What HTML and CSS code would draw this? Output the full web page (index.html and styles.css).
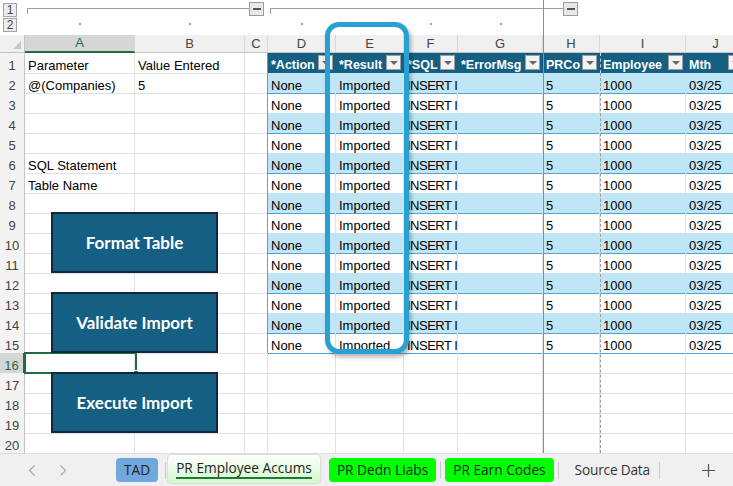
FILE: index.html
```html
<!DOCTYPE html>
<html lang="en">
<head>
  <meta charset="UTF-8">
  <title>PR Employee Accums</title>
  <link rel="stylesheet" href="styles.css">
</head>
<body>
  <div class="app">
    <div class="outline">
      <div class="levels"><span class="lvl">1</span><span class="lvl">2</span></div>
      <div class="grp g-ab"><i class="bar"></i><span class="tog"></span></div>
      <div class="grp g-dh"><i class="bar"></i><span class="tog"></span></div>
      <span class="dotcell"><i></i></span>
      <span class="dotcell"><i></i></span>
      <span class="dotcell"></span>
      <span class="dotcell"><i></i></span>
      <span class="dotcell"><i></i></span>
      <span class="dotcell"><i></i></span>
      <span class="dotcell"><i></i></span>
    </div>

    <div class="row hdr">
      <div class="ch corner"><svg width="8" height="8" viewBox="0 0 8 8"><path d="M8 0V8H0Z" fill="#c9c9c9"/></svg></div>
      <div class="ch on">A</div><div class="ch">B</div><div class="ch">C</div><div class="ch">D</div><div class="ch">E</div>
      <div class="ch">F</div><div class="ch">G</div><div class="ch">H</div><div class="ch">I</div><div class="ch">J</div>
    </div>

    <div class="row">
      <div class="c rh">1</div><div class="c">Parameter</div><div class="c">Value Entered</div><div class="c edge"></div>
      <div class="c th"><span>*Action</span><b class="flt"></b></div>
      <div class="c th"><span>*Result</span><b class="flt"></b></div>
      <div class="c th"><span>*SQL</span><b class="flt"></b></div>
      <div class="c th"><span>*ErrorMsg</span><b class="flt"></b></div>
      <div class="c th"><span>PRCo</span><b class="flt"></b></div>
      <div class="c th"><span>Employee</span><b class="flt"></b></div>
      <div class="c th"><span>Mth</span><b class="flt"></b></div>
    </div>

    <div class="row band">
      <div class="c rh">2</div><div class="c">@(Companies)</div><div class="c">5</div><div class="c edge"></div>
      <div class="c t">None</div><div class="c t">Imported</div><div class="c t clip">INSERT I</div><div class="c t"></div><div class="c t">5</div><div class="c t">1000</div><div class="c t">03/25</div>
    </div>
    <div class="row">
      <div class="c rh">3</div><div class="c"></div><div class="c"></div><div class="c edge"></div>
      <div class="c t">None</div><div class="c t">Imported</div><div class="c t clip">INSERT I</div><div class="c t"></div><div class="c t">5</div><div class="c t">1000</div><div class="c t">03/25</div>
    </div>
    <div class="row band">
      <div class="c rh">4</div><div class="c"></div><div class="c"></div><div class="c edge"></div>
      <div class="c t">None</div><div class="c t">Imported</div><div class="c t clip">INSERT I</div><div class="c t"></div><div class="c t">5</div><div class="c t">1000</div><div class="c t">03/25</div>
    </div>
    <div class="row">
      <div class="c rh">5</div><div class="c"></div><div class="c"></div><div class="c edge"></div>
      <div class="c t">None</div><div class="c t">Imported</div><div class="c t clip">INSERT I</div><div class="c t"></div><div class="c t">5</div><div class="c t">1000</div><div class="c t">03/25</div>
    </div>
    <div class="row band">
      <div class="c rh">6</div><div class="c">SQL Statement</div><div class="c"></div><div class="c edge"></div>
      <div class="c t">None</div><div class="c t">Imported</div><div class="c t clip">INSERT I</div><div class="c t"></div><div class="c t">5</div><div class="c t">1000</div><div class="c t">03/25</div>
    </div>
    <div class="row">
      <div class="c rh">7</div><div class="c">Table Name</div><div class="c"></div><div class="c edge"></div>
      <div class="c t">None</div><div class="c t">Imported</div><div class="c t clip">INSERT I</div><div class="c t"></div><div class="c t">5</div><div class="c t">1000</div><div class="c t">03/25</div>
    </div>
    <div class="row band">
      <div class="c rh">8</div><div class="c"></div><div class="c"></div><div class="c edge"></div>
      <div class="c t">None</div><div class="c t">Imported</div><div class="c t clip">INSERT I</div><div class="c t"></div><div class="c t">5</div><div class="c t">1000</div><div class="c t">03/25</div>
    </div>
    <div class="row">
      <div class="c rh">9</div><div class="c"></div><div class="c"></div><div class="c edge"></div>
      <div class="c t">None</div><div class="c t">Imported</div><div class="c t clip">INSERT I</div><div class="c t"></div><div class="c t">5</div><div class="c t">1000</div><div class="c t">03/25</div>
    </div>
    <div class="row band">
      <div class="c rh">10</div><div class="c"></div><div class="c"></div><div class="c edge"></div>
      <div class="c t">None</div><div class="c t">Imported</div><div class="c t clip">INSERT I</div><div class="c t"></div><div class="c t">5</div><div class="c t">1000</div><div class="c t">03/25</div>
    </div>
    <div class="row">
      <div class="c rh">11</div><div class="c"></div><div class="c"></div><div class="c edge"></div>
      <div class="c t">None</div><div class="c t">Imported</div><div class="c t clip">INSERT I</div><div class="c t"></div><div class="c t">5</div><div class="c t">1000</div><div class="c t">03/25</div>
    </div>
    <div class="row band">
      <div class="c rh">12</div><div class="c"></div><div class="c"></div><div class="c edge"></div>
      <div class="c t">None</div><div class="c t">Imported</div><div class="c t clip">INSERT I</div><div class="c t"></div><div class="c t">5</div><div class="c t">1000</div><div class="c t">03/25</div>
    </div>
    <div class="row">
      <div class="c rh">13</div><div class="c"></div><div class="c"></div><div class="c edge"></div>
      <div class="c t">None</div><div class="c t">Imported</div><div class="c t clip">INSERT I</div><div class="c t"></div><div class="c t">5</div><div class="c t">1000</div><div class="c t">03/25</div>
    </div>
    <div class="row band">
      <div class="c rh">14</div><div class="c"></div><div class="c"></div><div class="c edge"></div>
      <div class="c t">None</div><div class="c t">Imported</div><div class="c t clip">INSERT I</div><div class="c t"></div><div class="c t">5</div><div class="c t">1000</div><div class="c t">03/25</div>
    </div>
    <div class="row">
      <div class="c rh">15</div><div class="c"></div><div class="c"></div><div class="c edge"></div>
      <div class="c t">None</div><div class="c t">Imported</div><div class="c t clip">INSERT I</div><div class="c t"></div><div class="c t">5</div><div class="c t">1000</div><div class="c t">03/25</div>
    </div>
    <div class="row">
      <div class="c rh on">16</div><div class="c"></div><div class="c"></div><div class="c"></div><div class="c"></div><div class="c"></div><div class="c"></div><div class="c"></div><div class="c"></div><div class="c"></div><div class="c"></div>
    </div>
    <div class="row">
      <div class="c rh">17</div><div class="c"></div><div class="c"></div><div class="c"></div><div class="c"></div><div class="c"></div><div class="c"></div><div class="c"></div><div class="c"></div><div class="c"></div><div class="c"></div>
    </div>
    <div class="row">
      <div class="c rh">18</div><div class="c"></div><div class="c"></div><div class="c"></div><div class="c"></div><div class="c"></div><div class="c"></div><div class="c"></div><div class="c"></div><div class="c"></div><div class="c"></div>
    </div>
    <div class="row">
      <div class="c rh">19</div><div class="c"></div><div class="c"></div><div class="c"></div><div class="c"></div><div class="c"></div><div class="c"></div><div class="c"></div><div class="c"></div><div class="c"></div><div class="c"></div>
    </div>
    <div class="row">
      <div class="c rh">20</div><div class="c"></div><div class="c"></div><div class="c"></div><div class="c"></div><div class="c"></div><div class="c"></div><div class="c"></div><div class="c"></div><div class="c"></div><div class="c"></div>
    </div>

    <div class="tabs">
      <span class="nav"><svg width="8" height="11" viewBox="0 0 8 11"><path d="M6.5 0.5L1.5 5.5L6.5 10.5" fill="none" stroke="#a9a9a9" stroke-width="1.2"/></svg></span>
      <span class="nav"><svg width="8" height="11" viewBox="0 0 8 11"><path d="M1.5 0.5L6.5 5.5L1.5 10.5" fill="none" stroke="#a9a9a9" stroke-width="1.2"/></svg></span>
      <span class="tab tad">TAD</span><i class="sep"></i>
      <span class="tab active"><span>PR Employee Accums</span></span>
      <span class="tab lime">PR Dedn Liabs</span><i class="sep"></i>
      <span class="tab lime">PR Earn Codes</span><i class="sep"></i>
      <span class="tab plain">Source Data</span><i class="sep"></i>
      <span class="add"><svg width="13" height="13" viewBox="0 0 13 13"><path d="M6.5 0V13M0 6.5H13" stroke="#555" stroke-width="1.2"/></svg></span>
    </div>

    <!-- overlays -->
    <div class="vline"></div>
    <div class="pbreak top"></div>
    <div class="pbreak"></div>
    <div class="sel"><i class="handle"></i></div>
    <div class="shape s1">Format Table</div>
    <div class="shape s2">Validate Import</div>
    <div class="shape s3">Execute Import</div>
    <div class="focus"></div>
  </div>
</body>
</html>
```

FILE: styles.css
```css
* { box-sizing: border-box; }
body {
  margin: 0;
  background: #fff;
  font-family: "Liberation Sans", Arial, sans-serif;
  color: #000;
}
.app {
  position: relative;
  width: 733px;
  height: 486px;
  overflow: hidden;
  background: #fff;
}

/* outline (grouping) area */
.outline {
  display: grid;
  grid-template-columns: 25px 110px 110px 23px 68px 68px 54px 85px 57px 86px 60px;
  grid-template-rows: 17px 18px;
  height: 35px;
}
.levels {
  grid-row: 1 / 3;
  grid-column: 1;
  display: flex;
  flex-direction: column;
  gap: 1px;
  padding: 3px 0 0 3px;
}
.lvl {
  width: 14px;
  height: 14px;
  border: 1px solid #a3a3a3;
  background: #ececec;
  color: #444;
  font-size: 12px;
  line-height: 12px;
  text-align: center;
}
.grp {
  grid-row: 1;
  display: flex;
  align-items: flex-start;
}
.g-ab { grid-column: 2 / 5; }
.g-dh { grid-column: 5 / 10; }
.bar {
  flex: 1;
  height: 6px;
  margin: 8px 0 0 2px;
  border-top: 1px solid #a0a0a0;
  border-left: 1px solid #a0a0a0;
}
.tog {
  width: 15px;
  height: 14px;
  margin-top: 2px;
  border: 1px solid #9b9b9b;
  background: #e8e8e8;
  display: flex;
  align-items: center;
  justify-content: center;
}
.tog::after {
  content: "";
  width: 8px;
  height: 2px;
  background: #555;
}
.g-ab .tog { margin-right: 4px; }
.g-dh .tog { margin-right: 22px; }
.dotcell {
  grid-row: 2;
  display: flex;
  justify-content: center;
  padding-top: 6px;
}
.dotcell i {
  width: 2px;
  height: 2px;
  background: #9a9a9a;
}

/* sheet grid */
.row {
  display: grid;
  grid-template-columns: 25px 110px 110px 23px 68px 68px 54px 85px 57px 86px 60px;
  height: 20px;
  font-size: 13px;
}
.row.hdr { height: 18px; }
.ch {
  background: #f0f0f0;
  color: #444;
  text-align: center;
  line-height: 17px;
  border-right: 1px solid #d8d8d8;
  border-bottom: 1px solid #c4c4c4;
}
.ch.corner {
  display: flex;
  justify-content: flex-end;
  align-items: flex-end;
  padding: 0 3px 3px 0;
  border-right-color: #c4c4c4;
}
.ch.on {
  background: #d6d6d6;
  color: #1e6e42;
  border-bottom: 2px solid #1e6e42;
  line-height: 16px;
}
.c {
  padding: 5px 0 0 3px;
  line-height: 15px;
  white-space: nowrap;
  border-right: 1px solid #e1e1e1;
  border-bottom: 1px solid #e1e1e1;
}
.c.rh {
  padding-left: 0;
  text-align: center;
  background: #f3f3f3;
  color: #444;
  border-right-color: #c4c4c4;
  border-bottom-color: #dcdcdc;
}
.c.rh.on {
  background: #d6d6d6;
  color: #1e6e42;
  border-right: 2px solid #1e6e42;
}
.c.edge { border-right-color: #4ea6d6; }
.c.clip {
  overflow: hidden;
  letter-spacing: -0.5px;
}
.c.t { border-bottom-color: #4ea6d6; }
.band .c.t {
  background: #c0e6f5;
  border-right-color: #c0e6f5;
}

/* table header row */
.c.th {
  display: flex;
  justify-content: space-between;
  padding-right: 2px;
  background: #156082;
  border-right-color: #156082;
  border-bottom-color: #4ea6d6;
  color: #fff;
  font-weight: bold;
  font-size: 12.5px;
}
.flt {
  flex: none;
  width: 15px;
  height: 15px;
  margin-top: -3px;
  border: 1px solid #9e9e9e;
  background: #f3f3f3;
  display: flex;
  align-items: center;
  justify-content: center;
}
.flt::after {
  content: "";
  border-left: 4px solid transparent;
  border-right: 4px solid transparent;
  border-top: 4px solid #666;
}

/* sheet tabs */
.tabs {
  display: flex;
  align-items: center;
  height: 32px;
  margin-top: 1px;
  padding-left: 16px;
  background: #f0f0f0;
  font-family: "Open Sans", "Liberation Sans", sans-serif;
  font-size: 13.7px;
  color: #222;
}
.nav {
  width: 31px;
  display: flex;
  justify-content: center;
}
.tab {
  height: 24px;
  padding: 0 8px;
  line-height: 24px;
  border-radius: 4px;
}
.tad {
  margin-left: 38px;
  background: #6fa8dc;
}
.lime { background: #00ff00; }
.active {
  align-self: flex-start;
  height: 28px;
  margin: 1px 9px 0 0;
  background: linear-gradient(#ffffff, #d2f8cc);
  box-shadow: 0 0 2px rgba(0, 0, 0, 0.3);
  border-radius: 4px 4px 3px 3px;
  line-height: 18px;
  padding-top: 3px;
}
.active span {
  display: inline-block;
  border-bottom: 2px solid #1f7a36;
  line-height: 19px;
}
.plain {
  padding: 0 9px 0 12px;
  color: #333;
  letter-spacing: -0.2px;
}
.sep {
  width: 1px;
  height: 17px;
  margin: 0 4px;
  background: #c9c9c9;
}
.tad + .sep { margin: 0 2px 0 7px; }
.plain + .sep { margin: 0; }
.add {
  margin-left: 42px;
  display: flex;
}

/* overlays on the grid */
.vline {
  position: absolute;
  left: 543px;
  top: 0;
  width: 1px;
  height: 453px;
  background: #8e8e8e;
}
.pbreak {
  position: absolute;
  left: 600px;
  top: 73px;
  height: 380px;
  border-left: 1px dashed #9a9a9a;
}
.pbreak.top {
  top: 53px;
  height: 20px;
  border-left-color: rgba(255, 255, 255, 0.75);
}
.sel {
  position: absolute;
  left: 24px;
  top: 352px;
  width: 113px;
  height: 22px;
  border: 2px solid #1e6e42;
}
.handle {
  position: absolute;
  right: -4px;
  bottom: -4px;
  width: 6px;
  height: 6px;
  background: #1e6e42;
  border: 1px solid #fff;
}
.shape {
  position: absolute;
  left: 51px;
  width: 167px;
  height: 61px;
  display: flex;
  align-items: center;
  justify-content: center;
  background: #156082;
  border: 2px solid #0e2841;
  color: #fff;
  font-family: Lato, "Liberation Sans", sans-serif;
  font-weight: bold;
  font-size: 17px;
}
.s1 { top: 212px; }
.s2 { top: 292px; }
.s3 { top: 372px; }
.focus {
  position: absolute;
  left: 325px;
  top: 22px;
  width: 84px;
  height: 332px;
  border: 5px solid #27a1d3;
  border-radius: 14px;
  box-shadow: 2px 3px 4px rgba(0, 0, 0, 0.3);
}
```
